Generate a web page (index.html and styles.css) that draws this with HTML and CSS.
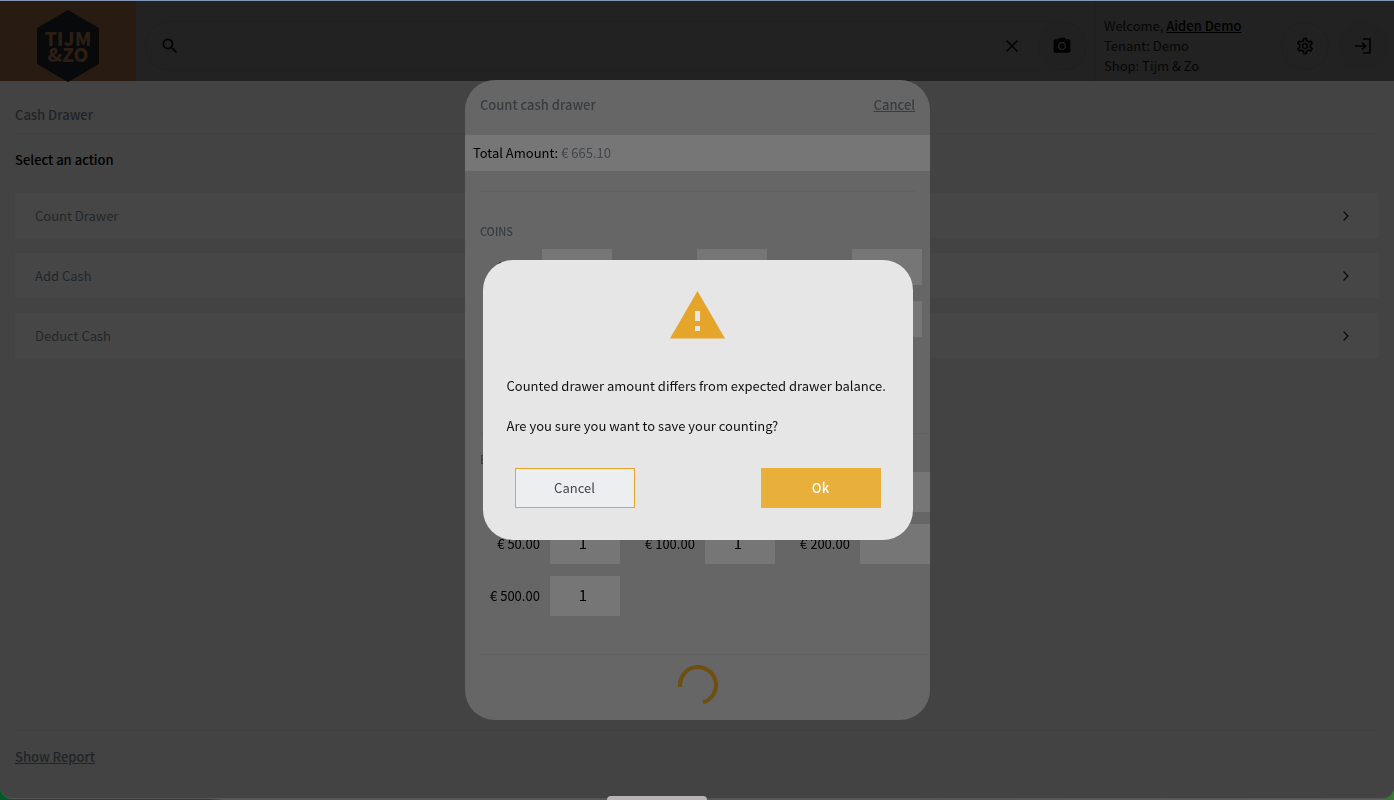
FILE: index.html
```html
<!DOCTYPE html>
<html lang="en">
<head>
<meta charset="utf-8">
<meta name="viewport" content="width=device-width, initial-scale=1">
<title>Cash Drawer</title>
<link rel="stylesheet" href="styles.css">
</head>
<body>
<div class="desktop">
<div class="app">
  <header class="topbar">
    <a class="logo" href="#" aria-label="Tijm &amp; Zo">
      <svg class="logo-shape" viewBox="0 0 62 72" aria-hidden="true"><path d="M31 0 62 18V54L31 72 0 54V18Z"/></svg>
      <span class="logo-text">TIJM<br>&amp;ZO</span>
    </a>
    <div class="search">
      <svg class="icon icon-search" viewBox="0 0 24 24" aria-hidden="true"><path d="M15.5 14h-.79l-.28-.27A6.47 6.47 0 0 0 16 9.500 6.500 6.500 0 1 0 9.500 16c1.610 0 3.090-.59 4.230-1.570l.27.28v.79l5 4.990L20.490 19zm-6 0a4.500 4.500 0 1 1 0-9 4.500 4.500 0 0 1 0 9z"/></svg>
      <input class="search-input" type="text" aria-label="Search">
      <button class="clear" aria-label="Clear search"><svg class="icon icon-line" viewBox="0 0 20 20"><path d="m4.500 4.500 11 11m0-11-11 11"/></svg></button>
      <button class="round" aria-label="Scan with camera"><svg class="icon" viewBox="0 0 24 24"><circle cx="12" cy="12" r="3.200"/><path d="M9 2 7.170 4H4c-1.100 0-2 .9-2 2v12c0 1.100.9 2 2 2h16c1.100 0 2-.9 2-2V6c0-1.100-.9-2-2-2h-3.170L15 2zm3 15c-2.760 0-5-2.240-5-5s2.240-5 5-5 5 2.240 5 5-2.240 5-5 5z"/></svg></button>
    </div>
    <div class="account">
      <div>Welcome, <a class="user" href="#">Aiden Demo</a></div>
      <div>Tenant: Demo</div>
      <div>Shop: Tijm &amp; Zo</div>
    </div>
    <div class="tools">
      <button class="round ring" aria-label="Settings"><svg class="icon" viewBox="0 0 24 24"><path d="M19.430 12.980c.04-.32.07-.64.07-.98 0-.34-.03-.66-.07-.98l2.110-1.650c.19-.15.24-.42.12-.64l-2-3.460c-.09-.16-.26-.25-.44-.25-.06 0-.12.01-.17.03l-2.490 1c-.52-.4-1.080-.73-1.690-.98l-.38-2.650C14.460 2.180 14.250 2 14 2h-4c-.25 0-.46.18-.49.42l-.38 2.650c-.61.25-1.170.59-1.690.98l-2.490-1c-.06-.02-.12-.03-.18-.03-.17 0-.34.09-.43.25l-2 3.460c-.13.22-.07.49.12.64l2.110 1.650c-.04.32-.07.65-.07.98 0 .33.03.66.07.98l-2.110 1.650c-.19.15-.24.42-.12.64l2 3.460c.09.16.26.25.44.25.06 0 .12-.01.17-.03l2.490-1c.52.4 1.080.73 1.690.98l.38 2.650c.03.24.24.42.49.42h4c.25 0 .46-.18.49-.42l.38-2.650c.61-.25 1.170-.59 1.690-.98l2.490 1c.06.02.12.03.18.03.17 0 .34-.09.43-.25l2-3.460c.12-.22.07-.49-.12-.64l-2.110-1.650zm-1.980-1.710c.04.31.05.52.05.73 0 .21-.02.43-.05.73l-.14 1.130.89.7 1.080.84-.7 1.210-1.270-.51-1.040-.42-.9.68c-.43.32-.84.56-1.250.73l-1.060.43-.16 1.130-.2 1.350h-1.400l-.19-1.350-.16-1.130-1.060-.43c-.43-.18-.83-.41-1.230-.71l-.91-.7-1.060.43-1.270.51-.7-1.210 1.080-.84.89-.7-.14-1.130c-.03-.31-.05-.54-.05-.74s.02-.43.05-.73l.14-1.130-.89-.7-1.080-.84.7-1.210 1.270.51 1.040.42.9-.68c.43-.32.84-.56 1.250-.73l1.060-.43.16-1.130.2-1.350h1.390l.19 1.350.16 1.130 1.060.43c.43.18.83.41 1.230.71l.91.7 1.060-.43 1.270-.51.7 1.210-1.070.85-.89.7.14 1.130zM12 8c-2.210 0-4 1.790-4 4s1.790 4 4 4 4-1.790 4-4-1.790-4-4-4zm0 6c-1.100 0-2-.9-2-2s.9-2 2-2 2 .9 2 2-.9 2-2 2z"/></svg></button>
      <button class="round" aria-label="Log out"><svg class="icon icon-line icon-exit" viewBox="0 0 20 20"><path d="M10 3h7v14h-7M2 10h10M9 6.500 12.500 10 9 13.500"/></svg></button>
    </div>
  </header>

  <main class="page">
    <h1 class="page-title">Cash Drawer</h1>
    <h2 class="page-subtitle">Select an action</h2>
    <div class="actions">
      <button class="action">Count Drawer<svg class="chevron" viewBox="0 0 8 12"><path d="m1.500 1.500 4.500 4.500-4.500 4.500"/></svg></button>
      <button class="action">Add Cash<svg class="chevron" viewBox="0 0 8 12"><path d="m1.500 1.500 4.500 4.500-4.500 4.500"/></svg></button>
      <button class="action">Deduct Cash<svg class="chevron" viewBox="0 0 8 12"><path d="m1.500 1.500 4.500 4.500-4.500 4.500"/></svg></button>
    </div>
    <footer class="page-footer"><a class="report" href="#">Show Report</a></footer>
  </main>
</div>
<div class="dock"></div>
</div>

<div class="overlay">
  <section class="modal" aria-label="Count cash drawer">
    <header class="modal-head"><h2 class="modal-title">Count cash drawer</h2><a class="modal-cancel" href="#">Cancel</a></header>
    <div class="total">Total Amount: <span class="amount">€ 665.10</span></div>
    <div class="modal-body">
      <hr class="rule rule-short">
      <h3 class="group coins-title">COINS</h3>
      <div class="money coins">
        <label class="cell">€ 0.01<input type="text"></label>
        <label class="cell">€ 0.02<input type="text"></label>
        <label class="cell">€ 0.05<input type="text"></label>
        <label class="cell">€ 0.10<input type="text"></label>
        <label class="cell">€ 0.20<input type="text"></label>
        <label class="cell">€ 0.50<input type="text"></label>
        <label class="cell">€ 1.00<input type="text"></label>
        <label class="cell">€ 2.00<input type="text"></label>
      </div>
      <hr class="rule">
      <h3 class="group bills-title">BILLS</h3>
      <div class="money bills">
        <label class="cell">€ 5.00<input type="text"></label>
        <label class="cell">€ 10.00<input type="text"></label>
        <label class="cell">€ 20.00<input type="text"></label>
        <label class="cell">€ 50.00<input type="text" value="1"></label>
        <label class="cell">€ 100.00<input type="text" value="1"></label>
        <label class="cell">€ 200.00<input type="text"></label>
        <label class="cell">€ 500.00<input type="text" value="1"></label>
      </div>
      <hr class="rule">
    </div>
    <svg class="spinner" viewBox="0 0 40 40" role="img" aria-label="Loading"><path d="M2.100 22A18 18 0 1 1 25 37.300"/></svg>
  </section>
</div>

<div class="overlay">
  <div class="dialog" role="alertdialog" aria-modal="true" aria-labelledby="message">
    <svg class="warning" viewBox="0 0 55 48" aria-hidden="true"><path fill-rule="evenodd" d="M27.500 0 55 47.500H0ZM25 20v10h5V20ZM25 35v5h5v-5Z"/></svg>
    <div class="message" id="message">
      <p>Counted drawer amount differs from expected drawer balance.</p>
      <p>Are you sure you want to save your counting?</p>
    </div>
    <div class="choices">
      <button class="choice">Cancel</button>
      <button class="choice choice-main">Ok</button>
    </div>
  </div>
</div>
</body>
</html>
```

FILE: styles.css
```css
* { box-sizing: border-box; }

body {
  margin: 0;
  font: 13px/20px "Noto Sans CJK SC", "Noto Sans", sans-serif;
  color: #000;
}

h1, h2, h3, p { margin: 0; font-size: inherit; }
button { padding: 0; border: 0; background: none; font: inherit; color: inherit; }
input { border: 0; outline: 0; font: inherit; color: inherit; }

.desktop {
  display: flex;
  min-height: 100vh;
  padding-bottom: 1px;
  background: linear-gradient(90deg, #005a26 0, #005a26 15%, #76485c 16%, #76485c 66%, #3a6b34 67%, #3a7a34 100%);
}
.app {
  flex: 1;
  display: flex;
  flex-direction: column;
  border-top: 1px solid #8396b3;
  border-bottom: 1px solid #555;
  border-radius: 0 0 12px 12px;
  background: #434343;
}
.dock {
  position: fixed;
  left: 50%;
  bottom: 0;
  width: 100px;
  height: 4px;
  margin-left: -90px;
  border-radius: 4px 4px 0 0;
  background: #b9b4b6;
}

.topbar { display: flex; align-items: center; height: 80px; background: #222; }
.logo {
  display: grid;
  place-items: center;
  align-self: stretch;
  width: 136px;
  background: #281c12;
  color: #2c1e13;
  text-decoration: none;
}
.logo > * { grid-area: 1 / 1; }
.logo-shape { width: 62px; height: 72px; margin-top: 9px; fill: #07090b; }
.logo-text { margin-top: 9px; font-size: 19px; font-weight: 900; line-height: 16px; text-align: center; }
.search {
  flex: 1;
  display: flex;
  align-items: center;
  height: 50px;
  margin: 10px 8px 0 9px;
  padding-left: 14px;
  border: 1px solid #202020;
  border-radius: 25px;
  background: #222;
}
.search-input { flex: 1; min-width: 0; height: 40px; background: none; }
.icon { display: block; width: 20px; height: 20px; fill: #020202; }
.icon-line { fill: none; stroke: #020202; stroke-width: 1.500; }
.icon-exit { stroke-width: 1.700; }
.clear { margin-right: 16px; }
.round { display: grid; place-items: center; width: 48px; height: 48px; border-radius: 50%; background: #212121; }
.ring { border: 1px solid #202020; background: none; }
.account { width: 186px; height: 80px; padding: 15px 0 0 8px; border-left: 1px solid #202020; color: #060606; }
.user { color: #000; font-weight: 500; }
.tools { display: flex; gap: 10px; margin-top: 10px; padding-right: 7px; }

.page { flex: 1; display: flex; flex-direction: column; padding: 24px 15px 0; }
.page-title { padding-bottom: 8px; border-bottom: 1px solid #404040; color: #202428; font-weight: 500; }
.page-subtitle { margin-top: 16px; font-weight: 500; }
.actions { display: grid; gap: 15px; margin-top: 23px; }
.action {
  display: flex;
  align-items: center;
  justify-content: space-between;
  height: 45px;
  padding: 0 29px 0 20px;
  background: #464646;
  color: #23272a;
}
.chevron { width: 8px; height: 12px; fill: none; stroke: #090909; stroke-width: 1.200; }
.page-footer { height: 68px; margin-top: auto; padding-top: 16px; border-top: 1px solid #404040; }
.report { color: #202428; font-weight: 500; }

.overlay { position: fixed; inset: 0; display: grid; place-items: center; padding-left: 1px; }
.modal { width: 33.4%; min-width: 430px; border-radius: 30px; overflow: hidden; background: #666; }
.modal-head { display: flex; justify-content: space-between; padding: 15px 15px 20px; color: #383c40; font-weight: 500; }
.modal-title { font-weight: 500; }
.modal-cancel { color: inherit; }
.total { padding: 8px; background: #767676; }
.amount { color: #43464b; }
.modal-body { padding-left: 15px; }
.rule { height: 1px; margin: 0; border: 0; background: #616161; }
.rule-short { margin: 20px 15px 0 0; }
.group { color: #383c40; font-size: 11px; font-weight: 500; }
.coins-title { margin: 29px 0 8px; }
.bills-title { margin: 15px 0 3px; }
.money { display: grid; }
.coins { grid-template-columns: repeat(3, 132px); gap: 16px 23px; margin-bottom: 44px; }
.bills { grid-template-columns: repeat(3, 140px); gap: 12px 15px; margin-bottom: 38px; }
.cell { display: flex; align-items: center; justify-content: flex-end; gap: 10px; white-space: nowrap; }
.cell input { width: 70px; height: 36px; padding: 0 4px 4px 0; background: #767676; font-size: 15px; text-align: center; }
.bills input { height: 40px; }
.spinner { display: block; width: 40px; height: 40px; margin: 10px auto 15px; fill: none; stroke: #6e4f12; stroke-width: 4; }

.dialog { width: 430px; padding: 31px 24px 32px; border-radius: 30px; background: #e6e6e6; }
.warning { display: block; width: 55px; height: 48px; margin: 0 auto 37px; fill: #e5a52b; }
.message { display: grid; gap: 20px; white-space: nowrap; color: #111; }
.choices { display: flex; justify-content: space-between; margin-top: 32px; padding: 0 8px; }
.choice { width: 120px; height: 40px; border: 1px solid #e5a52b; background: #edeef0; color: #43464b; }
.choice-main { border-color: #e8b03b; background: #e8b03b; color: #fff; font-weight: 500; }
```
